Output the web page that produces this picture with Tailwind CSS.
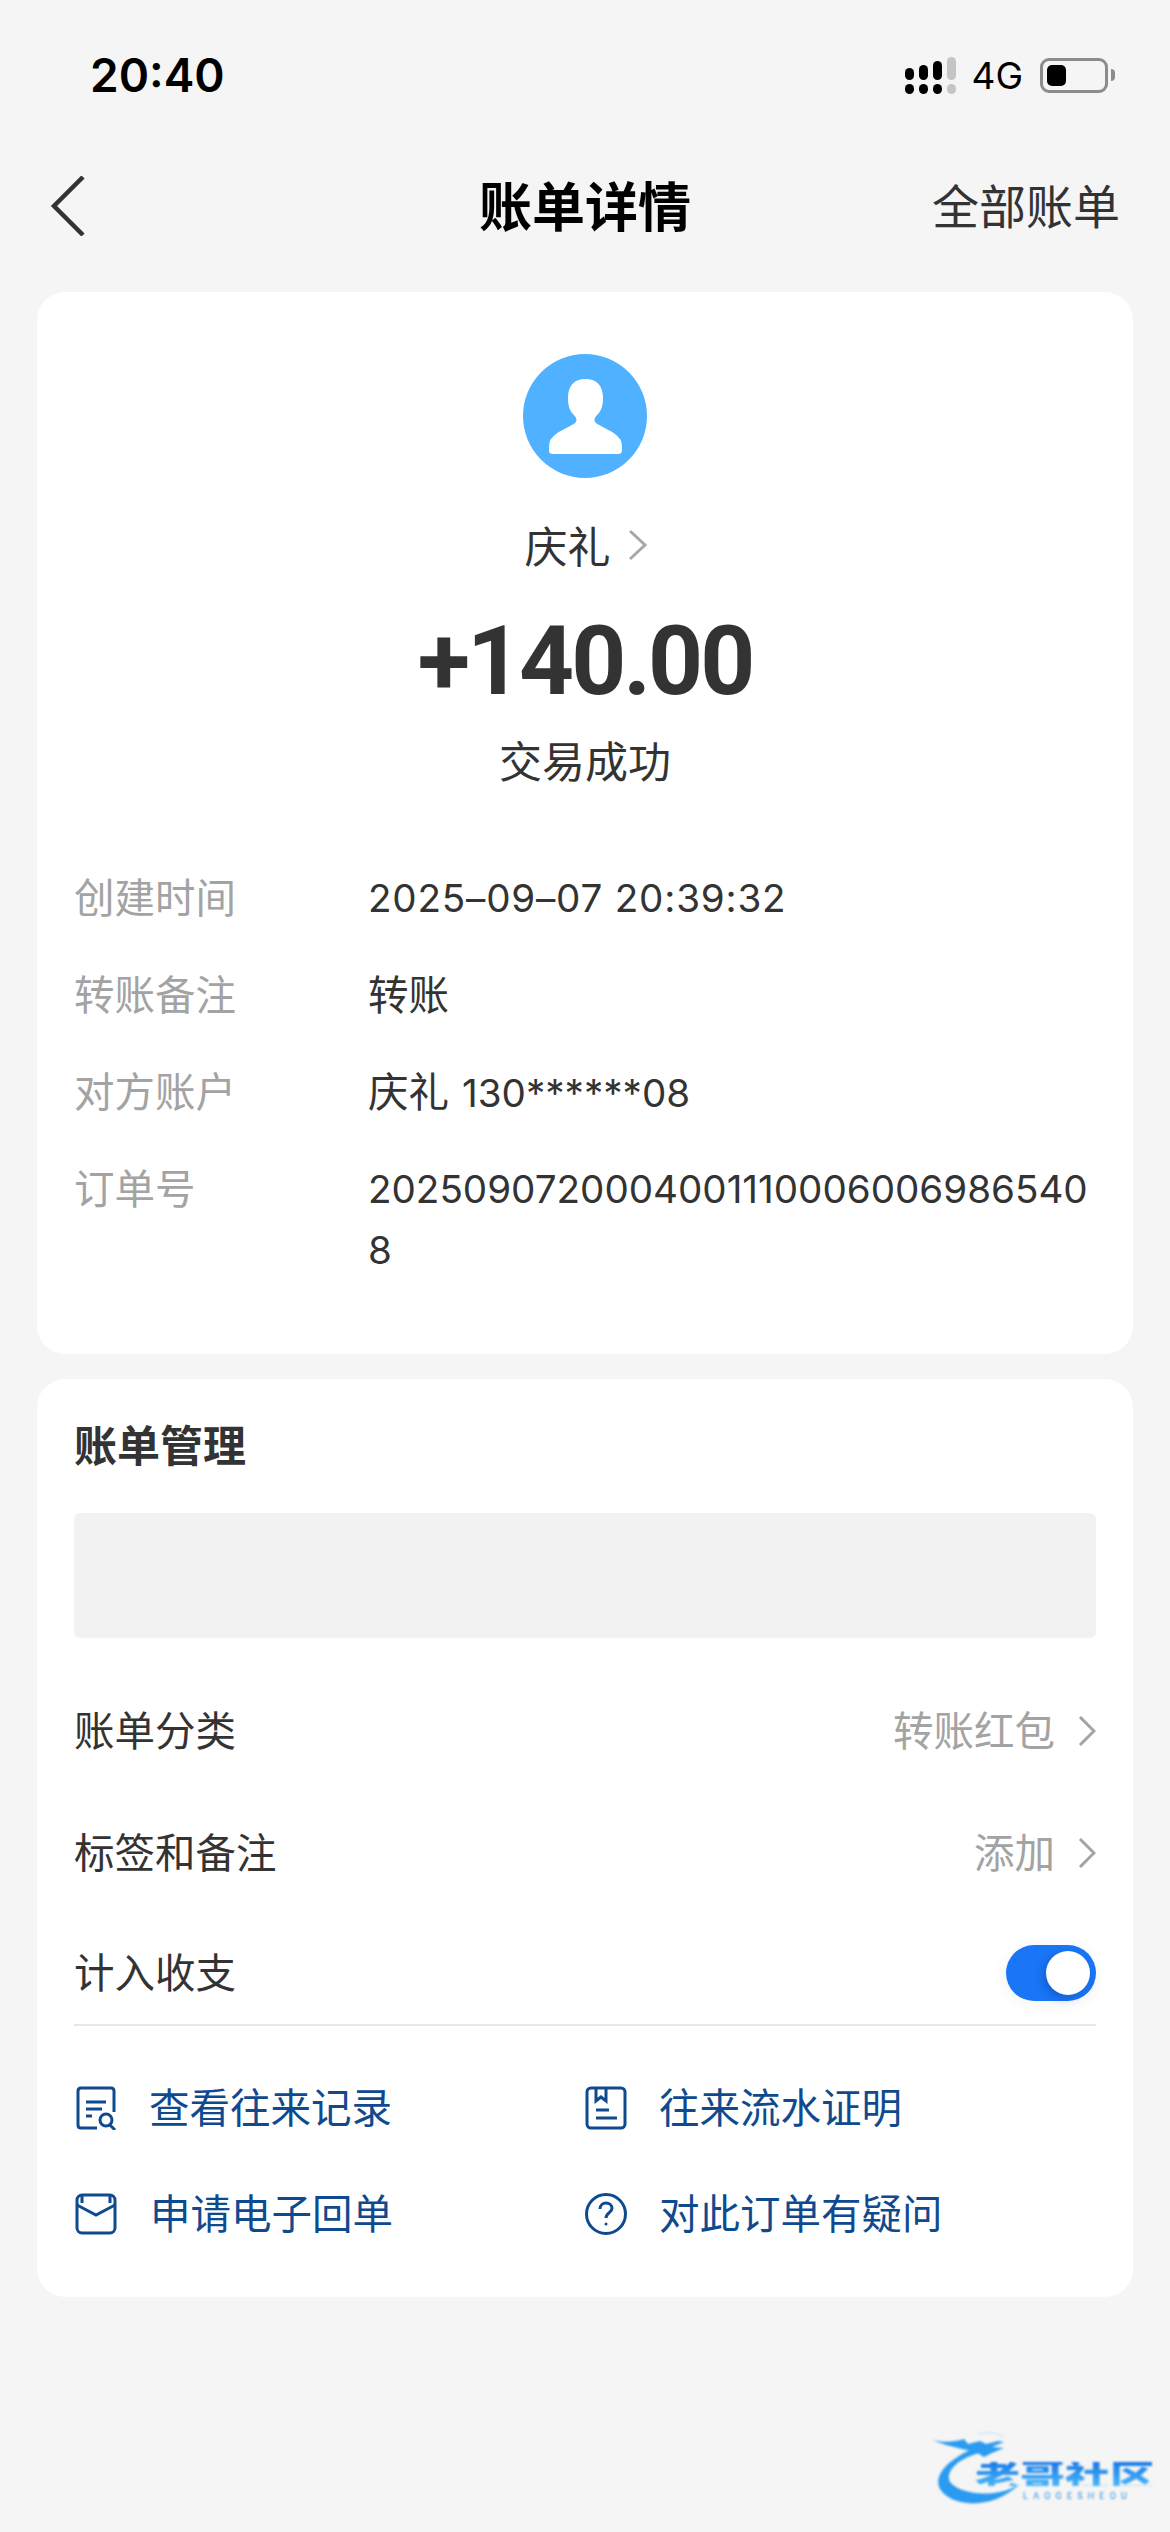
<!DOCTYPE html>
<html lang="zh-CN">
<head>
    <meta charset="UTF-8">
    <meta name="viewport" content="width=device-width, initial-scale=1.0">
    <title>账单详情</title>
    <script src="https://cdn.jsdelivr.net/npm/@tailwindcss/browser@4"></script>
</head>
<body class="bg-[#f5f5f5] font-['Noto_Sans_CJK_SC',sans-serif]">
<div class="relative w-[1170px] h-[2532px] overflow-hidden px-[37px]">
    <!-- Status bar -->
    <div class="h-[150px] flex items-center justify-between pl-[53px] pr-[18px]">
        <span class="text-[46px] leading-none font-semibold text-black font-['Inter',sans-serif]">20:40</span>
        <div class="flex items-center gap-[17px]">
            <svg class="-mr-[3px]" width="52" height="37" viewBox="0 0 52 37" fill="#000">
                <rect x="0" y="11" width="9" height="12" rx="4.5"/><rect x="14" y="8" width="9" height="15" rx="4.5"/><rect x="28" y="4" width="9" height="19" rx="4.5"/><rect x="42" y="0" width="9" height="23" rx="4.5" fill="#c4c4c4"/>
                <rect x="0" y="27" width="9" height="10" rx="4.5"/><rect x="14" y="27" width="9" height="10" rx="4.5"/><rect x="28" y="27" width="9" height="10" rx="4.5"/><rect x="42" y="27" width="9" height="10" rx="4.5" fill="#c4c4c4"/>
            </svg>
            <span class="text-[37px] leading-none text-black font-['Inter',sans-serif]">4G</span>
            <div class="flex items-center gap-[3px]">
                <div class="w-[68px] h-[35px] rounded-[9px] border-[3px] border-[#8c8c8c] p-[4px]">
                    <div class="w-[19px] h-full rounded-[5px] bg-black"></div>
                </div>
                <div class="w-[4px] h-[12px] rounded-r-full bg-[#8c8c8c]"></div>
            </div>
        </div>
    </div>

    <!-- Nav -->
    <div class="relative h-[112px] flex items-center justify-between">
        <svg class="ml-[13px]" width="36" height="60" viewBox="0 0 36 60" fill="none" stroke="#333" stroke-width="4.5">
            <path d="M33 2 L4 31 L33 60" transform="translate(0,-1)"/>
        </svg>
        <h1 class="absolute left-0 right-0 text-center text-[53px] leading-none font-bold text-black -mt-[4px]">账单详情</h1>
        <span class="text-[47px] leading-none text-[#333] mr-[13px] -mt-[5px]">全部账单</span>
    </div>

    <!-- Transaction card -->
    <section class="mt-[30px] bg-white rounded-[28px] h-[1062px] px-[37px] pt-[62px]">
        <div class="flex flex-col items-center">
            <div class="w-[124px] h-[124px] rounded-full bg-[#4fb1ff] flex items-center justify-center">
                <svg width="73" height="75" viewBox="0 0 73 75" fill="#fff">
                    <path d="M36.500 0C48 0 54 7 54 19C54 27 52 32 49 35C46 38 44 41 47 44C52 48 65 52 70 59C72 61 73 63 73 71C73 74 71.500 75 69 75H4C1.500 75 0 74 0 71C0 63 1 61 3 59C8 52 21 48 26 44C29 41 27 38 24 35C21 32 19 27 19 19C19 7 25 0 36.500 0Z"/>
                </svg>
            </div>
            <div class="mt-[36px] h-[60px] flex items-center gap-[17px] pl-[2px]">
                <span class="text-[43px] leading-none text-[#333]">庆礼</span>
                <svg class="mt-[2px]" width="20" height="32" viewBox="0 0 20 32" fill="none" stroke="#a8a8a8" stroke-width="3"><path d="M2 2 L17 16 L2 30"/></svg>
            </div>
            <div class="mt-[34px] h-[106px] flex items-center text-[96px] leading-none font-bold tracking-[-3px] text-[#333] font-['Roboto',sans-serif]">+140.00</div>
            <div class="mt-[15px] text-[43px] leading-[60px] text-[#333]">交易成功</div>
        </div>
        <dl class="mt-[76px] flex flex-col gap-[36px] text-[40.5px] leading-[61px]">
            <div class="flex"><dt class="w-[294px] shrink-0 text-[#a3a3a3]">创建时间</dt><dd class="text-[#333] text-[38.6px] tracking-[0.8px] translate-y-[3px] font-['Inter',sans-serif]">2025–09–07 20:39:32</dd></div>
            <div class="flex"><dt class="w-[294px] shrink-0 text-[#a3a3a3]">转账备注</dt><dd class="text-[#333]">转账</dd></div>
            <div class="flex h-[61px]"><dt class="w-[294px] shrink-0 text-[#a3a3a3]">对方账户</dt><dd class="text-[#333]">庆礼 <span class="ml-[4px] text-[38.6px] font-['Inter',sans-serif]">130******08</span></dd></div>
            <div class="flex"><dt class="w-[294px] shrink-0 text-[#a3a3a3]">订单号</dt><dd class="text-[#333] text-[38.6px] translate-y-[3px] font-['Inter',sans-serif] break-all">20250907200040011100060069865408</dd></div>
        </dl>
    </section>

    <!-- Bill management card -->
    <section class="mt-[25px] bg-white rounded-[28px] h-[918px] px-[37px] pt-[34px]">
        <h2 class="text-[43px] leading-[60px] font-bold text-[#333]">账单管理</h2>
        <div class="mt-[40px] h-[125px] rounded-[6px] bg-[#f2f2f2]"></div>
        <div class="mt-[63px] flex items-center justify-between h-[60px]">
            <span class="text-[40.5px] leading-none text-[#333] -mt-[4px]">账单分类</span>
            <div class="flex items-center gap-[23px] text-[40.5px] leading-none text-[#a3a3a3]"><span class="-mt-[4px]">转账红包</span>
                <svg width="18" height="32" viewBox="0 0 18 32" fill="none" stroke="#a3a3a3" stroke-width="3"><path d="M2 2 L16 16 L2 30"/></svg>
            </div>
        </div>
        <div class="mt-[62px] flex items-center justify-between h-[60px]">
            <span class="text-[40.5px] leading-none text-[#333] -mt-[4px]">标签和备注</span>
            <div class="flex items-center gap-[23px] text-[40.5px] leading-none text-[#a3a3a3]"><span class="-mt-[4px]">添加</span>
                <svg width="18" height="32" viewBox="0 0 18 32" fill="none" stroke="#a3a3a3" stroke-width="3"><path d="M2 2 L16 16 L2 30"/></svg>
            </div>
        </div>
        <div class="mt-[60px] flex items-center justify-between h-[60px]">
            <span class="text-[40.5px] leading-none text-[#333] -mt-[4px]">计入收支</span>
            <div class="w-[90px] h-[56px] rounded-full bg-[#1976f7] flex items-center justify-end pr-[6px] shadow-[0_2px_16px_rgba(0,0,0,0.06)]">
                <div class="w-[44px] h-[44px] rounded-full bg-white shadow-[-3px_3px_8px_rgba(0,40,120,0.3)]"></div>
            </div>
        </div>
        <div class="mt-[21px] border-t-[2px] border-[#e8e8e8]"></div>
        <div class="mt-[52px] grid grid-cols-[511px_1fr] gap-y-[46px] text-[40.5px] leading-none text-[#0f4a8f]">
            <div class="h-[60px] flex items-center gap-[32px]">
                <svg class="ml-[1px]" width="42" height="44" viewBox="0 0 42 44" fill="none" stroke="#0f4a8f" stroke-width="3">
                    <path d="M39 26V5Q39 2 36 2H6Q3 2 3 5V39Q3 42 6 42H22"/>
                    <path d="M11 16H31M11 23H27M11 30H17"/>
                    <circle cx="31" cy="34" r="6"/><path d="M35 39L40 44"/>
                </svg>
                <span class="-mt-[3px]">查看往来记录</span>
            </div>
            <div class="h-[60px] flex items-center gap-[32px]">
                <svg width="42" height="44" viewBox="0 0 42 44" fill="none" stroke="#0f4a8f" stroke-width="3">
                    <rect x="2" y="2" width="38" height="40" rx="4"/>
                    <path d="M11 2V15L16 11L21 15V2"/>
                    <path d="M11 24H24M11 32H32"/>
                </svg>
                <span class="-mt-[3px]">往来流水证明</span>
            </div>
            <div class="h-[60px] flex items-center gap-[33px]">
                <svg class="ml-[1px]" width="42" height="42" viewBox="0 0 42 42" fill="none" stroke="#0f4a8f" stroke-width="3">
                    <rect x="2" y="2" width="38" height="38" rx="5"/>
                    <path d="M2 12L21 22L40 12"/>
                    <path d="M7 2V10M35 2V10"/>
                </svg>
                <span class="-mt-[3px]">申请电子回单</span>
            </div>
            <div class="h-[60px] flex items-center gap-[32px]">
                <svg width="42" height="42" viewBox="0 0 42 42" fill="none" stroke="#0f4a8f" stroke-width="3">
                    <circle cx="21" cy="21" r="19.500"/>
                    <path d="M15 16C15 12 18 10 21 10C24.500 10 27 12.500 27 15.500C27 19.500 21 20 21 25"/>
                    <circle cx="21" cy="31" r="1.500" fill="#0f4a8f" stroke="none"/>
                </svg>
                <span class="-mt-[3px]">对此订单有疑问</span>
            </div>
        </div>
    </section>

    <!-- Watermark -->
    <div class="absolute left-[932px] top-[2432px] w-[225px] h-[80px] blur-[0.9px]">
        <svg class="absolute left-0 top-0" width="225" height="80" viewBox="0 0 225 80">
            <path d="M48 14C20 24 0 42 8 57C18 74 58 80 88 52C66 66 30 64 18 50C12 38 30 24 52 20Z" fill="#2a9bf0"/>
            <path d="M0 8C12 11 22 10 32 7L36 12L48 9L54 12L66 9L72 10L60 15L72 16L60 21L52 25L44 20L30 17L14 13Z" fill="#2a9bf0"/>
            <path d="M46 2C54 0 64 0 72 5" fill="none" stroke="#bcdcf5" stroke-width="1"/>
        </svg>
        <div class="absolute left-[43px] top-[24px] text-[45px] leading-[36px] font-black scale-y-[0.68] origin-center whitespace-nowrap bg-linear-to-b from-[#1878e6] to-[#4ab6f8] bg-clip-text text-transparent">老哥社区</div>
        <div class="absolute left-[91px] top-[60px] text-[9px] leading-[8px] tracking-[5.2px] text-[#2a8fe0] font-['Roboto',sans-serif] whitespace-nowrap">LAOGESHEOU</div>
    </div>
</div>
</body>
</html>
